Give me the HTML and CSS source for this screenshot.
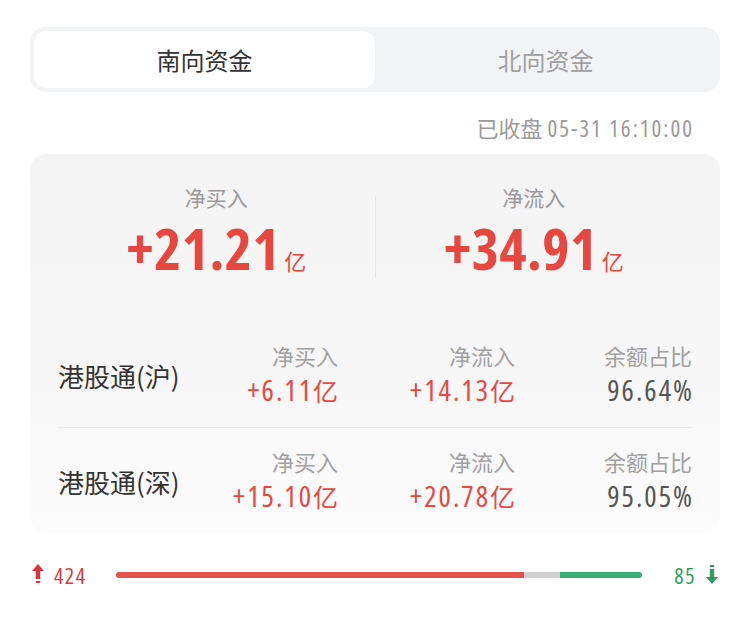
FILE: index.html
```html
<!DOCTYPE html>
<html lang="zh-CN">
<head>
  <meta charset="UTF-8" />
  <meta name="viewport" content="width=device-width, initial-scale=1.0"/>
  <title>资金流向</title>
  <link rel="stylesheet" href="styles.css">
</head>
<body>

  <div class="tabs">
    <div class="tab active">南向资金</div>
    <div class="tab">北向资金</div>
  </div>

  <div class="stamp">已收盘 <span class="num">05-31 16:10:00</span></div>

  <div class="card">
    <div class="summary">
      <div class="summary-col">
        <div class="summary-label">净买入</div>
        <div class="summary-value"><span class="num">+21.21</span><span class="unit">亿</span></div>
      </div>
      <div class="summary-divider"></div>
      <div class="summary-col">
        <div class="summary-label">净流入</div>
        <div class="summary-value"><span class="num">+34.91</span><span class="unit">亿</span></div>
      </div>
    </div>

    <div class="rows">
      <div class="row">
        <div class="row-name">港股通(沪)</div>
        <div class="cell">
          <div class="cell-label">净买入</div>
          <div class="cell-value up"><span class="num">+6.11</span>亿</div>
        </div>
        <div class="cell">
          <div class="cell-label">净流入</div>
          <div class="cell-value up"><span class="num">+14.13</span>亿</div>
        </div>
        <div class="cell">
          <div class="cell-label">余额占比</div>
          <div class="cell-value"><span class="num">96.64%</span></div>
        </div>
      </div>
      <div class="row">
        <div class="row-name">港股通(深)</div>
        <div class="cell">
          <div class="cell-label">净买入</div>
          <div class="cell-value up"><span class="num">+15.10</span>亿</div>
        </div>
        <div class="cell">
          <div class="cell-label">净流入</div>
          <div class="cell-value up"><span class="num">+20.78</span>亿</div>
        </div>
        <div class="cell">
          <div class="cell-label">余额占比</div>
          <div class="cell-value"><span class="num">95.05%</span></div>
        </div>
      </div>
    </div>
  </div>

  <div class="ratio">
    <svg class="arrow" width="12" height="22" viewBox="0 0 12 22">
      <path d="M6 0 L12 7 L8.2 7 L8.2 15 L3.8 15 L3.8 7 L0 7 Z" fill="#e0323a"/>
      <rect x="3.8" y="17" width="4.4" height="2" fill="#e0323a"/>
    </svg>
    <span class="count up num">424</span>
    <div class="bar">
      <div class="bar-up" style="width: 77.6%"></div>
      <div class="bar-flat"></div>
      <div class="bar-down" style="width: 15.6%"></div>
    </div>
    <span class="count down num">85</span>
    <svg class="arrow" width="12" height="22" viewBox="0 0 12 22">
      <rect x="3.8" y="1" width="4.4" height="2" fill="#2f9d5f"/>
      <path d="M3.8 5 L8.2 5 L8.2 13 L12 13 L6 20 L0 13 L3.8 13 Z" fill="#2f9d5f"/>
    </svg>
  </div>

</body>
</html>
```

FILE: styles.css
```css
body {
  margin: 0;
  padding: 0;
  background-color: #fff;
  font-family: "Noto Sans CJK SC", "Noto Sans", sans-serif;
  color: #333;
}

/* condensed digits, close to the DIN look of the app */
.num {
  font-family: "Open Sans", "Roboto", sans-serif;
  font-stretch: 75%;
}

.tabs {
  display: flex;
  margin: 27px 30px 0;
  padding: 4px;
  height: 57px;
  background-color: #f2f3f5;
  border-radius: 16px;
}

.tab {
  flex: 1;
  display: flex;
  align-items: center;
  justify-content: center;
  font-size: 24px;
  color: #a0a0a0;
  border-radius: 12px;
}

.tab.active {
  background-color: #fff;
  color: #333;
}

.stamp {
  padding: 20px 58px 11px 0;
  line-height: 30px;
  text-align: right;
  font-size: 22px;
  color: #9a9a9a;
}

.stamp .num {
  font-size: 23px;
  letter-spacing: 2px;
  margin-right: -2px;
}

.card {
  margin: 0 30px;
  padding: 0 28px;
  border-radius: 16px;
  background: linear-gradient(#f4f4f4, #f7f7f7 60%, #fcfcfc);
}

.summary {
  display: flex;
  align-items: flex-start;
  padding-top: 29px;
  height: 139px;
}

.summary-col {
  flex: 1;
  text-align: center;
}

.summary-divider {
  width: 1px;
  height: 82px;
  margin-top: 13px;
  background-color: #e6e6e6;
}

.summary-label {
  font-size: 21px;
  line-height: 28px;
  color: #9a9a9a;
}

.summary-value {
  color: #e8473f;
  line-height: 52px;
  margin-top: 11px;
}

.summary-value .num {
  font-size: 58px;
  font-weight: bold;
  letter-spacing: 0.5px;
}

.summary-value .unit {
  font-size: 22px;
  margin-left: 4px;
}

.row {
  display: grid;
  grid-template-columns: minmax(0, 1fr) 177px 177px 177px;
  align-items: center;
  padding: 18px 0 17px;
}

.row + .row {
  border-top: 1px solid #ebebeb;
}

.row-name {
  font-size: 26px;
  color: #333;
  white-space: nowrap;
}

.cell {
  text-align: right;
}

.cell-label {
  font-size: 22px;
  line-height: 30px;
  color: #a0a0a0;
}

.cell-value {
  font-size: 25px;
  line-height: 40px;
  color: #555;
}

.cell-value .num {
  font-size: 29px;
  letter-spacing: 2px;
}

.cell-value:not(.up) .num {
  margin-right: -2px;
}

.up {
  color: #e8473f;
}

.ratio {
  display: flex;
  align-items: center;
  padding: 0 32px;
  margin-top: 31px;
  height: 22px;
}

.count {
  font-size: 22px;
  letter-spacing: 1.5px;
}

.count.up {
  margin: 0 29px 0 10px;
  color: #d9383e;
}

.count.down {
  margin: 0 10px 0 32px;
  color: #2f9d5f;
}

.bar {
  flex: 1;
  display: flex;
  height: 6px;
}

.bar-up {
  background-color: #e5524b;
  border-radius: 3px 0 0 3px;
}

.bar-flat {
  flex: 1;
  background-color: #d0d0d0;
}

.bar-down {
  background-color: #3aae74;
  border-radius: 0 3px 3px 0;
}
```
